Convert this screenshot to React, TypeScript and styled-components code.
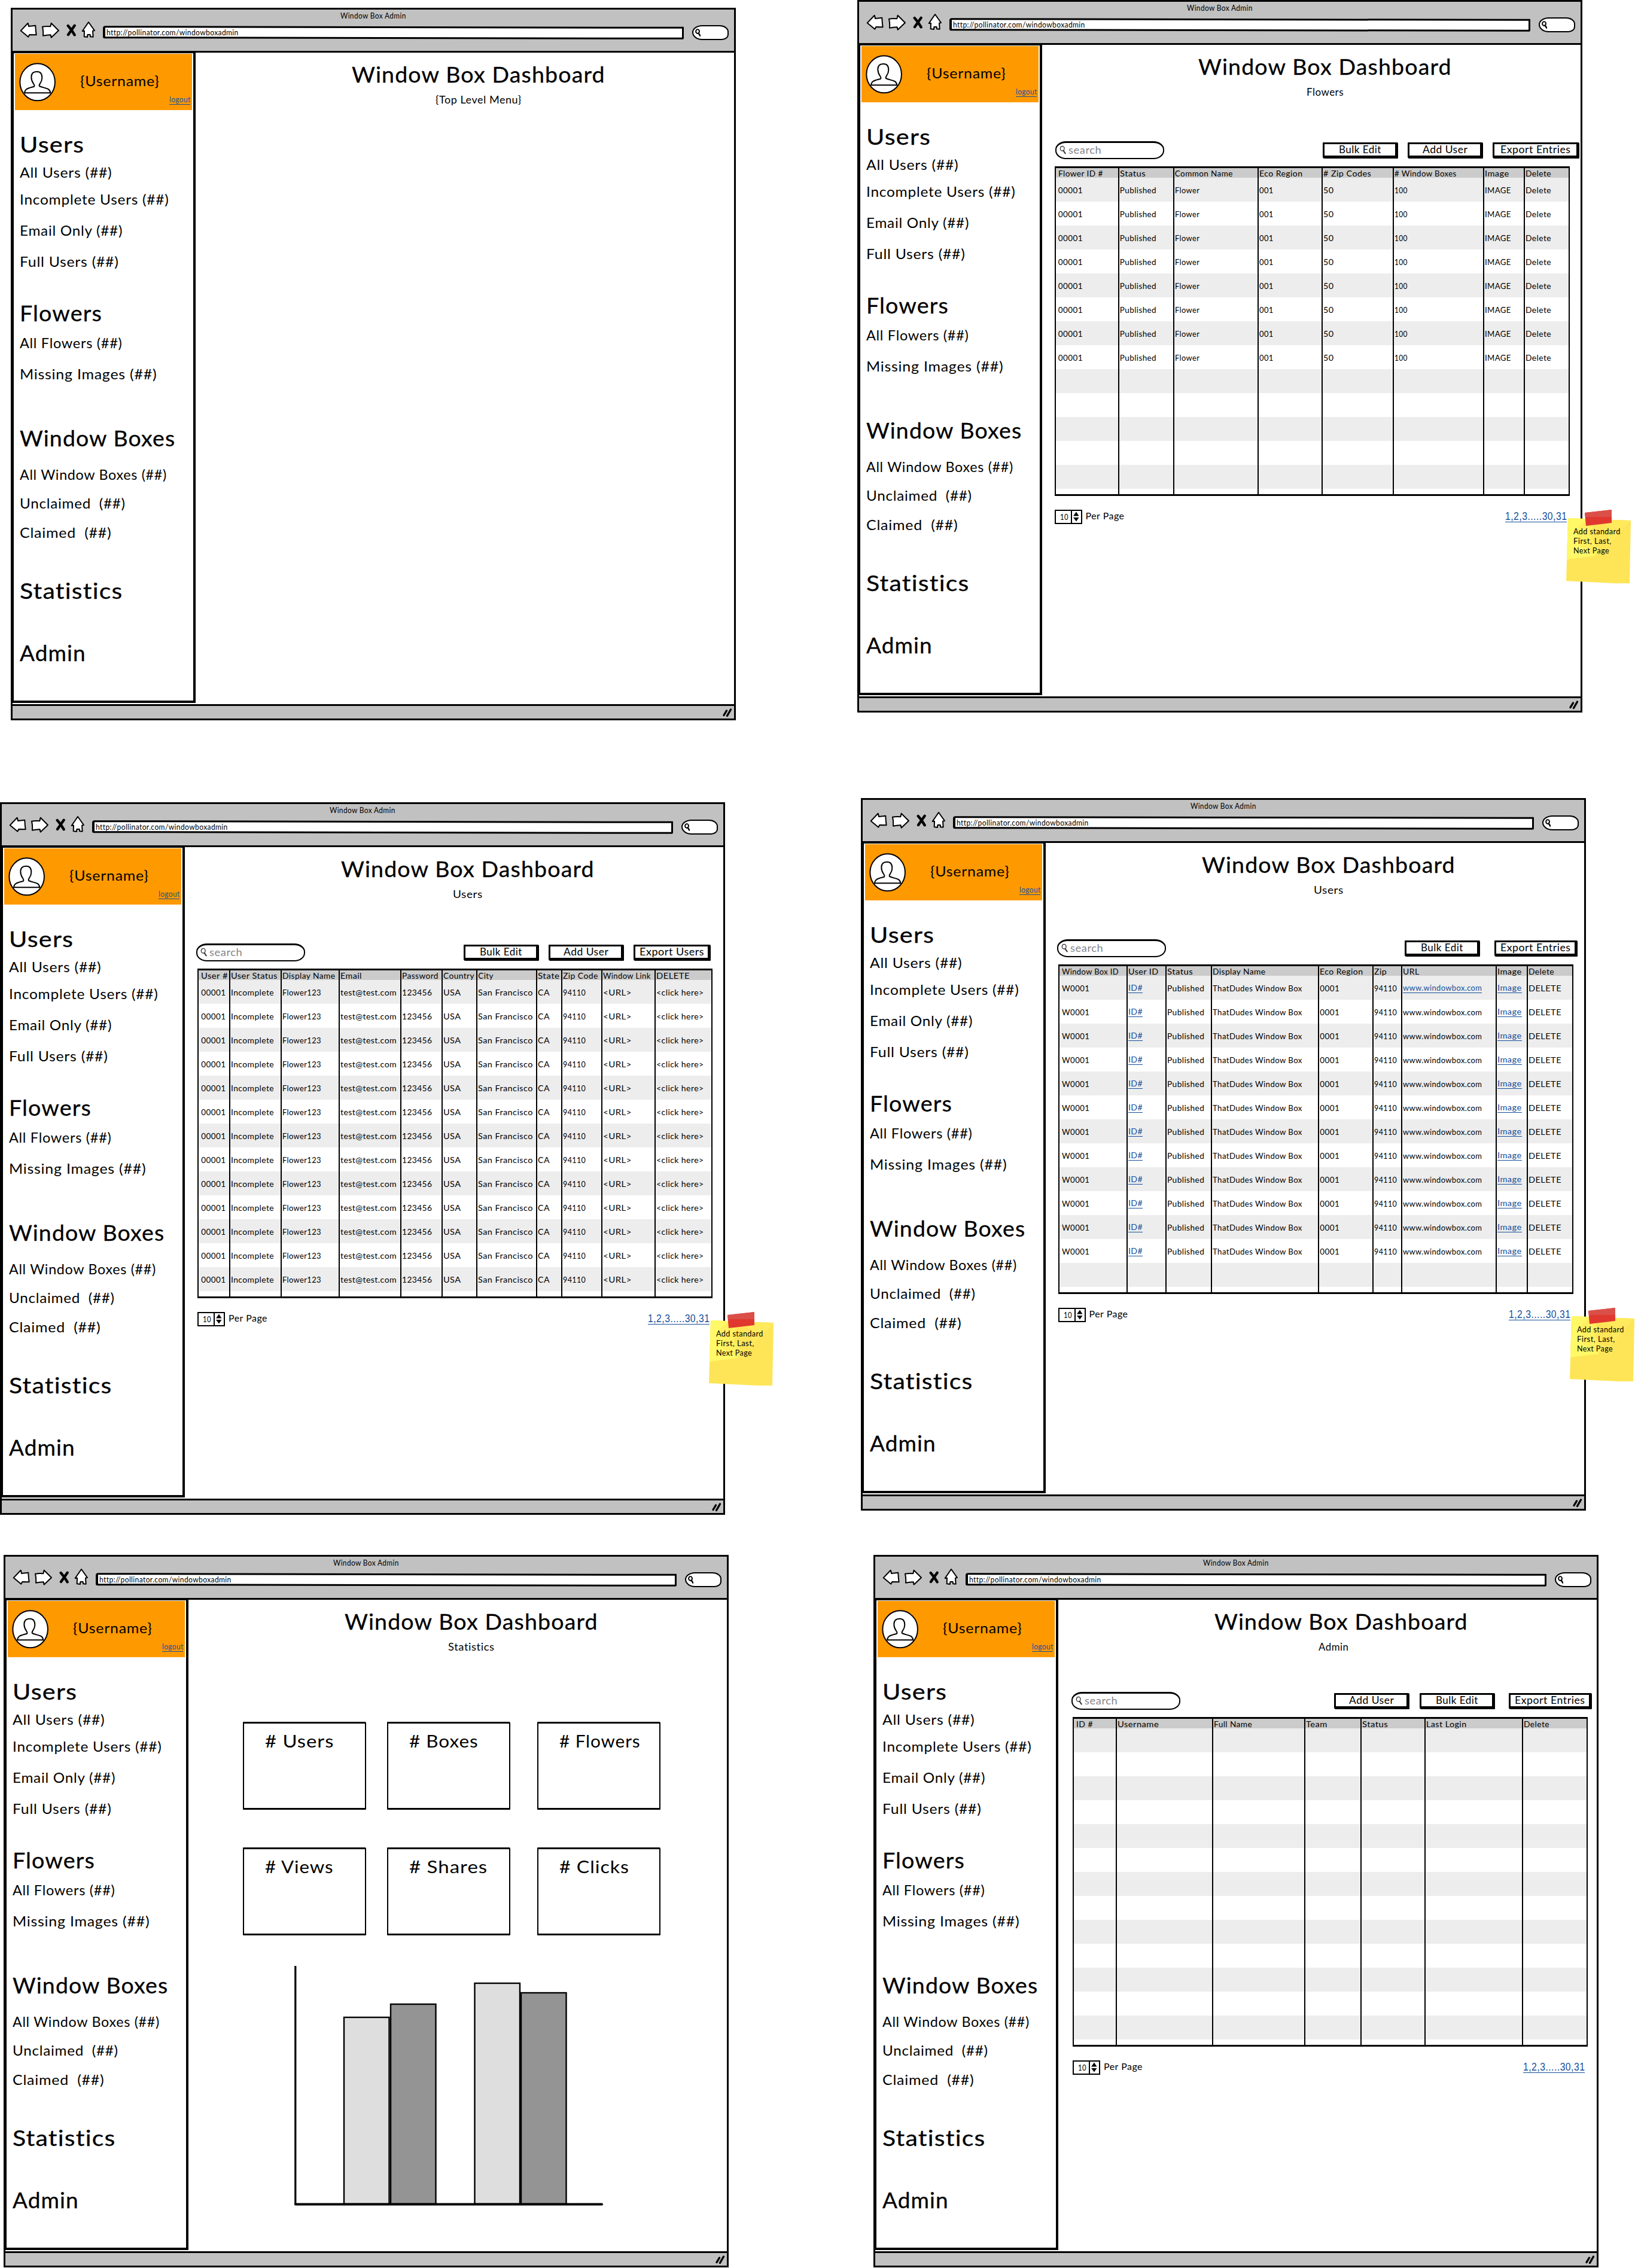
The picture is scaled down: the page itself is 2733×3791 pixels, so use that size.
import React, { useLayoutEffect, useRef, useState } from "react";
import styled, { createGlobalStyle } from "styled-components";

const INK = "#000";
const CHROME = "#c1c1c1";
const LINK = "#15509a";

const GlobalStyle = createGlobalStyle`
  html, body { margin: 0; padding: 0; background: #fff; }
  body { font-family: Lato, "Open Sans", sans-serif; color: ${INK}; font-variant-ligatures: none; }
  * { box-sizing: border-box; }
`;

/* ---------- text set to a given measure ---------- */

const Measure = styled.span`
  display: inline-block;
  white-space: pre;
  text-align: left;
`;

const Run = styled.span`
  display: inline-block;
  white-space: pre;
  letter-spacing: 0.03em;
  transform-origin: 0 50%;
`;

function Fit({ w, children }: { w: number; children: string }) {
  const ref = useRef<HTMLSpanElement>(null);
  const [scale, setScale] = useState(1);
  useLayoutEffect(() => {
    if (!ref.current) return;
    setScale(w / ref.current.offsetWidth);
  }, [w, children]);
  return (
    <Measure style={{ width: w }}>
      <Run ref={ref} style={{ transform: `scaleX(${scale})` }}>
        {children}
      </Run>
    </Measure>
  );
}

/* ---------- canvas and browser window ---------- */

const Canvas = styled.div`
  position: relative;
  width: 2733px;
  height: 3791px;
  overflow: hidden;
  background: #fff;
`;

const Frame = styled.section<{ $x: number; $y: number }>`
  position: absolute;
  left: ${(p) => p.$x}px;
  top: ${(p) => p.$y}px;
  width: 1212px;
  height: 1191px;
  border: 3px solid ${INK};
  display: flex;
  flex-direction: column;
  background: #fff;
`;

const Chrome = styled.header`
  height: 72px;
  flex: none;
  background: ${CHROME};
  border-bottom: 3px solid ${INK};
  padding-top: 1px;
`;

const WindowTitle = styled.div`
  height: 18px;
  line-height: 18px;
  font-size: 13px;
  text-align: center;
`;

const NavRow = styled.div`
  height: 30px;
  display: flex;
  align-items: center;
  padding-left: 12.3px;
`;

const Icon = styled.svg<{ $gap?: number }>`
  flex: none;
  display: block;
  margin-left: ${(p) => p.$gap ?? 0}px;
  fill: #fff;
  stroke: ${INK};
  stroke-width: 6;
  stroke-linejoin: round;
  stroke-linecap: round;
`;

const HeavyStroke = styled.path`
  stroke-width: 13;
`;

const UrlBar = styled.div`
  position: relative;
  width: 971px;
  height: 21px;
  margin: 8px 0 0 11px;
  padding-left: 6.5px;
  font-size: 14px;
  line-height: 20px;
  isolation: isolate;

  &::before {
    content: "";
    position: absolute;
    z-index: -1;
    inset: 0;
    background: #fff;
    border: 3px solid ${INK};
    border-left-width: 4px;
    border-radius: 4px 1px 2px 3px;
    transform: rotate(0.1deg);
  }
`;

const SearchPill = styled.div`
  width: 61px;
  height: 25px;
  margin: 8px 0 0 14px;
  border: 2.5px solid ${INK};
  border-radius: 18px 16px 12px 18px / 13px 12px 10px 14px;
  background: #fff;
  display: flex;
  align-items: center;
  padding-left: 3px;
`;

const Body = styled.div`
  height: 1089px;
  flex: none;
  display: flex;
`;

const Footer = styled.footer`
  flex: 1;
  background: ${CHROME};
  border-top: 3px solid ${INK};
  display: flex;
  justify-content: flex-end;
  align-items: center;
  padding-right: 2px;
`;

/* ---------- sidebar ---------- */

const Sidebar = styled.aside`
  width: 306px;
  height: 1087px;
  flex: none;
  border: solid ${INK};
  border-width: 1px 4px 4px 2px;
  padding: 1px 2px 0;
`;

const Profile = styled.div`
  height: 94px;
  background: #ff9900;
  display: flex;
  align-items: center;
  padding: 0 3px 0 6px;
`;

const Username = styled.div`
  margin: -3px 0 0 40px;
  font-size: 22.5px;
  line-height: 28px;
  width: 133px;
`;

const Logout = styled.a`
  align-self: flex-end;
  margin: 0 0 9px auto;
  font-size: 13.5px;
  line-height: 16px;
  color: ${LINK};
  border-bottom: 1px solid ${LINK};
`;

const NavHeading = styled.h2<{ $mt: number }>`
  margin: ${(p) => p.$mt}px 0 0;
  padding-left: 8px;
  height: 44px;
  line-height: 44px;
  font-size: 36px;
  font-weight: 400;
  -webkit-text-stroke: 0.3px currentColor;
`;

const NavLink = styled.div<{ $mt: number }>`
  margin-top: ${(p) => p.$mt}px;
  padding-left: 8px;
  height: 28px;
  line-height: 27px;
  font-size: 23px;
`;

type NavEntry = { label: string; w: number; mt: number; heading?: boolean };

const NAV: NavEntry[] = [
  { label: "Users", w: 108, mt: 34.6, heading: true },
  { label: "All Users (##)", w: 155, mt: 12.4 },
  { label: "Incomplete Users (##)", w: 250, mt: 16.7 },
  { label: "Email Only (##)", w: 172, mt: 24 },
  { label: "Full Users (##)", w: 166, mt: 24.1 },
  { label: "Flowers", w: 138, mt: 49.1, heading: true },
  { label: "All Flowers (##)", w: 172, mt: 15.1 },
  { label: "Missing Images (##)", w: 229, mt: 23.7 },
  { label: "Window Boxes", w: 260, mt: 70.3, heading: true },
  { label: "All Window Boxes (##)", w: 246, mt: 26 },
  { label: "Unclaimed  (##)", w: 177, mt: 19.6 },
  { label: "Claimed  (##)", w: 153, mt: 21 },
  { label: "Statistics", w: 173, mt: 60.4, heading: true },
  { label: "Admin", w: 111, mt: 60, heading: true },
];

/* ---------- main column ---------- */

const Main = styled.main`
  flex: 1;
  display: flex;
  flex-direction: column;
  align-items: flex-start;
  padding-top: 14px;
`;

const PageTitle = styled.h1`
  width: 100%;
  margin: 0;
  padding-left: 46px;
  text-align: center;
  font-size: 36px;
  line-height: 44px;
  font-weight: 400;
  -webkit-text-stroke: 0.3px currentColor;
`;

const SubTitle = styled.div<{ $shift?: number }>`
  width: 100%;
  margin-top: 9px;
  padding-left: ${(p) => 46 + (p.$shift ?? 0)}px;
  text-align: center;
  font-size: 17.5px;
  line-height: 24px;
`;

const Toolbar = styled.div<{ $mt: number; $x: number }>`
  height: 30px;
  margin: ${(p) => p.$mt}px 0 0 ${(p) => p.$x}px;
  display: flex;
  align-items: center;
`;

const SearchBox = styled.div`
  width: 182px;
  height: 30px;
  border: 2px solid ${INK};
  border-top-width: 3px;
  border-radius: 18px / 14px;
  display: flex;
  align-items: center;
  gap: 4px;
  padding: 0 0 2px 5px;
  color: #85858d;
  font-size: 17px;
  line-height: 22px;
`;

const Button = styled.div<{ $gap: number; $w: number }>`
  width: ${(p) => p.$w}px;
  height: 27px;
  margin-left: ${(p) => p.$gap}px;
  border: solid ${INK};
  border-width: 3px 5px 5px 3px;
  border-radius: 1px 2px 1px 3px;
  background: #fff;
  font-size: 16.5px;
  line-height: 19px;
  display: flex;
  justify-content: center;
`;

const Grid = styled.div<{ $x: number }>`
  width: 861px;
  height: 551px;
  margin: 12px 0 0 ${(p) => p.$x}px;
  border: solid ${INK};
  border-width: 3px 2px;
  display: flex;
  flex-direction: column;
  overflow: hidden;
  font-size: 13.5px;
`;

const GridRow = styled.div<{ $cols: string; $bg: string; $h: number }>`
  display: grid;
  grid-template-columns: ${(p) => p.$cols};
  height: ${(p) => p.$h}px;
  flex: none;
  background: ${(p) => p.$bg};
`;

const Cell = styled.div<{ $pad: number }>`
  display: flex;
  align-items: center;
  line-height: 18px;
  padding: ${(p) => p.$pad}px 0 0 1.3px;
  border-right: 2px solid ${INK};
  min-width: 0;

  &:first-child { padding-left: 4.3px; }
  &:last-child { border-right: 0; }
`;

const CellLink = styled.a`
  height: 16px;
  line-height: 15px;
  color: ${LINK};
  border-bottom: 1px solid ${LINK};
`;

const Pager = styled.div<{ $x: number }>`
  width: 856px;
  height: 24px;
  margin: 23px 0 0 ${(p) => p.$x}px;
  display: flex;
  align-items: center;
`;

const Stepper = styled.div`
  width: 46px;
  height: 24px;
  border: 2.5px solid ${INK};
  display: flex;
  font-size: 13px;
  line-height: 20px;
`;

const StepperValue = styled.div`
  width: 27px;
  padding-left: 7px;
  border-right: 2px solid ${INK};
`;

const PerPage = styled.div`
  margin: -4px 0 0 6px;
  font-size: 16px;
  line-height: 22px;
`;

const PageLinks = styled.a`
  margin: -4px 0 0 auto;
  height: 21px;
  line-height: 21px;
  font-family: "Liberation Sans", Arial, sans-serif;
  font-size: 18.5px;
  color: ${LINK};
  border-bottom: 1px solid ${LINK};
`;

/* ---------- sticky note ---------- */

const Note = styled.div`
  position: absolute;
  z-index: 1;
  left: 1182px;
  top: 848px;
  width: 110px;
  height: 126px;
  padding: 29px 0 0 12px;
  font-size: 13px;
  line-height: 16px;
`;

const NotePaper = styled.svg`
  position: absolute;
  inset: 0;
  z-index: -1;
`;

const NoteLine = styled.div`
  height: 16.2px;
`;

function StickyNote() {
  return (
    <Note>
      <NotePaper width="110" height="126" viewBox="0 0 110 126">
        <polygon points="3,15 108,19 106,124 82,124 0,120" fill="#fee557" />
        <polygon points="3,15 46,17 42,48 58,74 1,84" fill="#fff05f" />
        <polygon points="3,15 34,16 18,30 22,62 50,78 1,84" fill="#fffb69" opacity="0.75" />
        <polygon points="46,17 74,32 66,66 108,19" fill="#ffe95c" />
        <polygon points="31,6 76,1 76,23 33,28" fill="#e0382f" />
        <polygon points="31,6 76,1 76,13 32,13" fill="#da5049" />
      </NotePaper>
      <NoteLine><Fit w={79}>Add standard</Fit></NoteLine>
      <NoteLine><Fit w={64}>First, Last,</Fit></NoteLine>
      <NoteLine><Fit w={60}>Next Page</Fit></NoteLine>
    </Note>
  );
}

/* ---------- shared pieces ---------- */

function Magnifier({ size, heavy }: { size: number; heavy?: boolean }) {
  return (
    <svg width={size * 0.75} height={size} viewBox="0 0 12 16" fill="none" stroke={heavy ? INK : "#333"} strokeWidth={heavy ? 2.4 : 1.4} strokeLinecap="round">
      <ellipse cx="5" cy="5.6" rx="3.6" ry="4.2" />
      <path d="M7 9.4 L10.4 14.4" strokeWidth={heavy ? 3 : 2.2} />
    </svg>
  );
}

function BrowserChrome() {
  return (
    <Chrome>
      <WindowTitle><Fit w={110}>Window Box Admin</Fit></WindowTitle>
      <NavRow>
        <Icon width="29.3" height="28.7" viewBox="58 76 88 86">
          <path d="M63 122 L99 84 Q102 90 103 100 L137 96 Q138 120 141 143 L107 142 L101 153 Z" />
        </Icon>
        <Icon $gap={6.6} width="31.3" height="28.7" viewBox="166 76 94 86">
          <path d="M172 102 Q192 98 212 101 L216 84 L253 121 L216 156 L213 143 Q194 144 175 147 Q177 124 172 102 Z" />
        </Icon>
        <Icon $gap={10} width="18.7" height="22" viewBox="290 82 56 66">
          <HeavyStroke d="M301 94 Q318 112 334 140 M334 93 L302 139" />
        </Icon>
        <Icon $gap={6.7} width="24.7" height="29.3" viewBox="366 76 74 88">
          <path d="M402 82 L432 124 L423 126 L425 156 L411 155 L410 145 L397 145 L396 157 L380 155 L381 126 L371 127 Z" />
        </Icon>
        <UrlBar><Fit w={221}>http://pollinator.com/windowboxadmin</Fit></UrlBar>
        <SearchPill><Magnifier size={13} heavy /></SearchPill>
      </NavRow>
    </Chrome>
  );
}

function SideNav() {
  return (
    <Sidebar>
      <Profile>
        <Icon width="63.3" height="66.7" viewBox="52 280 190 200">
          <ellipse cx="147" cy="380" rx="88" ry="93" />
          <path d="M82 434 C84 412 100 411 130 402 C138 392 116 386 116 355 C116 335 128 327 144 327 C162 327 170 338 170 358 C170 385 150 390 157 400 C180 412 210 406 212 434 Z" />
        </Icon>
        <Username><Fit w={133}>{"{Username}"}</Fit></Username>
        <Logout><Fit w={35.5}>logout</Fit></Logout>
      </Profile>
      {NAV.map((n) =>
        n.heading ? (
          <NavHeading key={n.label} $mt={n.mt}><Fit w={n.w}>{n.label}</Fit></NavHeading>
        ) : (
          <NavLink key={n.label} $mt={n.mt}><Fit w={n.w}>{n.label}</Fit></NavLink>
        )
      )}
    </Sidebar>
  );
}

type ScreenProps = {
  x: number;
  y: number;
  sub: string;
  subW: number;
  subShift?: number;
  note?: boolean;
  children?: React.ReactNode;
};

function Screen({ x, y, sub, subW, subShift, note, children }: ScreenProps) {
  return (
    <Frame $x={x} $y={y}>
      <BrowserChrome />
      <Body>
        <SideNav />
        <Main>
          <PageTitle><Fit w={424}>Window Box Dashboard</Fit></PageTitle>
          <SubTitle $shift={subShift}><Fit w={subW}>{sub}</Fit></SubTitle>
          {children}
        </Main>
      </Body>
      <Footer>
        <svg width="18" height="16" viewBox="0 0 18 16" stroke={INK} strokeWidth="3.4" strokeLinecap="round">
          <path d="M3 12.5 L7.5 5 M8.5 13.5 L14.5 3" />
        </svg>
      </Footer>
      {note && <StickyNote />}
    </Frame>
  );
}

type Column = { head: string; hw: number; edge?: number; cell?: string; cw?: number; link?: boolean; linkFirst?: boolean };
type Action = { label: string; w: number; box: number; gap: number };

type ListingProps = {
  top?: number;
  toolX: number;
  gridX: number;
  actions: Action[];
  columns: Column[];
  filled: number;
};

function Listing({ top = 70, toolX, gridX, actions, columns, filled }: ListingProps) {
  let from = 2;
  const cols = columns
    .map((c) => {
      if (c.edge === undefined) return "1fr";
      const width = c.edge - from;
      from = c.edge;
      return `${width.toFixed(1)}px`;
    })
    .join(" ");
  return (
    <>
      <Toolbar $mt={top} $x={toolX}>
        <SearchBox><Magnifier size={15} /><Fit w={55}>search</Fit></SearchBox>
        {actions.map((a) => (
          <Button key={a.label} $gap={a.gap} $w={a.box}><Fit w={a.w}>{a.label}</Fit></Button>
        ))}
      </Toolbar>
      <Grid $x={gridX}>
        <GridRow $cols={cols} $bg="#cbcbcb" $h={16}>
          {columns.map((c) => (
            <Cell key={c.head} $pad={0}><Fit w={c.hw}>{c.head}</Fit></Cell>
          ))}
        </GridRow>
        {Array.from({ length: 14 }, (_, r) => (
          <GridRow key={r} $cols={cols} $bg={r % 2 ? "#fff" : "#ededed"} $h={40}>
            {columns.map((c) => {
              const text = r < filled && c.cell ? <Fit w={c.cw ?? 0}>{c.cell}</Fit> : null;
              const linked = c.link || (c.linkFirst && r === 0);
              return (
                <Cell key={c.head} $pad={2}>
                  {text && linked ? <CellLink>{text}</CellLink> : text}
                </Cell>
              );
            })}
          </GridRow>
        ))}
      </Grid>
      <Pager $x={gridX}>
        <Stepper>
          <StepperValue><Fit w={14}>10</Fit></StepperValue>
          <svg width="13" height="19" viewBox="0 0 13 19" fill={INK}>
            <path d="M7 1.5 L11.5 8.5 H2 Z M2 11 H11.5 L7 17.5 Z" />
          </svg>
        </Stepper>
        <PerPage><Fit w={65}>Per Page</Fit></PerPage>
        <PageLinks><Fit w={103}>1,2,3.....30,31</Fit></PageLinks>
      </Pager>
    </>
  );
}

/* ---------- statistics ---------- */

const Cards = styled.div`
  margin: 113px 0 0 91px;
  display: grid;
  grid-template-columns: 241px 251px 206px;
  row-gap: 63px;
`;

const Card = styled.div`
  width: 206px;
  height: 147px;
  border: solid ${INK};
  border-width: 3px 2px;
  border-radius: 1px 2px 1px 1px;
  padding: 12px 0 0 35px;
  font-size: 28px;
  line-height: 34px;
`;

const Chart = styled.svg`
  display: block;
  margin: 51px 0 0 177px;
`;

const STATS = [
  ["# Users", 115],
  ["# Boxes", 116],
  ["# Flowers", 136],
  ["# Views", 115],
  ["# Shares", 131],
  ["# Clicks", 117],
] as const;

const BARS = [
  { x: 83, top: 86, fill: "#dedede" },
  { x: 161, top: 64, fill: "#949494" },
  { x: 301.5, top: 29, fill: "#dedede" },
  { x: 379, top: 45, fill: "#949494" },
];

function Statistics() {
  return (
    <>
      <Cards>
        {STATS.map(([label, w]) => (
          <Card key={label}><Fit w={w}>{label}</Fit></Card>
        ))}
      </Cards>
      <Chart width="520" height="403" viewBox="0 0 520 403" stroke={INK}>
        {BARS.map((b) => (
          <rect key={b.x} x={b.x} y={b.top} width="75.5" height={398 - b.top} fill={b.fill} strokeWidth="2.4" />
        ))}
        <path d="M1.8 1 V398.5" strokeWidth="3.2" strokeLinecap="round" fill="none" />
        <path d="M2 398.5 H514" strokeWidth="4" strokeLinecap="round" fill="none" />
      </Chart>
    </>
  );
}

/* ---------- data ---------- */

const FLOWER_COLUMNS: Column[] = [
  { head: "Flower ID #", hw: 75, edge: 108, cell: "00001", cw: 41 },
  { head: "Status", hw: 43, edge: 200, cell: "Published", cw: 61 },
  { head: "Common Name", hw: 97, edge: 341.5, cell: "Flower", cw: 41 },
  { head: "Eco Region", hw: 73, edge: 448.5, cell: "001", cw: 24 },
  { head: "# Zip Codes", hw: 80, edge: 567, cell: "50", cw: 17 },
  { head: "# Window Boxes", hw: 104, edge: 718.5, cell: "100", cw: 22 },
  { head: "Image", hw: 41, edge: 786, cell: "IMAGE", cw: 44 },
  { head: "Delete", hw: 43, cell: "Delete", cw: 43 },
];

const USER_COLUMNS: Column[] = [
  { head: "User #", hw: 45, edge: 54.5, cell: "00001", cw: 41 },
  { head: "User Status", hw: 78, edge: 140.5, cell: "Incomplete", cw: 72 },
  { head: "Display Name", hw: 89, edge: 237.5, cell: "Flower123", cw: 65 },
  { head: "Email", hw: 36, edge: 341, cell: "test@test.com", cw: 94 },
  { head: "Password", hw: 61, edge: 409.5, cell: "123456", cw: 50 },
  { head: "Country", hw: 52, edge: 468, cell: "USA", cw: 29 },
  { head: "City", hw: 26, edge: 568, cell: "San Francisco", cw: 92 },
  { head: "State", hw: 36, edge: 610, cell: "CA", cw: 20 },
  { head: "Zip Code", hw: 59, edge: 677, cell: "94110", cw: 38 },
  { head: "Window Link", hw: 80, edge: 766, cell: "<URL>", cw: 48 },
  { head: "DELETE", hw: 56, cell: "<click here>", cw: 80 },
];

const BOX_COLUMNS: Column[] = [
  { head: "Window Box ID", hw: 95, edge: 116.5, cell: "W0001", cw: 46 },
  { head: "User ID", hw: 51, edge: 181, cell: "ID#", cw: 24, link: true },
  { head: "Status", hw: 43, edge: 257, cell: "Published", cw: 62 },
  { head: "Display Name", hw: 89, edge: 436.5, cell: "ThatDudes Window Box", cw: 150 },
  { head: "Eco Region", hw: 73, edge: 527, cell: "0001", cw: 33 },
  { head: "Zip", hw: 21, edge: 575.5, cell: "94110", cw: 38 },
  { head: "URL", hw: 28, edge: 733, cell: "www.windowbox.com", cw: 132, linkFirst: true },
  { head: "Image", hw: 41, edge: 785.5, cell: "Image", cw: 41, link: true },
  { head: "Delete", hw: 43, cell: "DELETE", cw: 55 },
];

const ADMIN_COLUMNS: Column[] = [
  { head: "ID #", hw: 28, edge: 73.5 },
  { head: "Username", hw: 69, edge: 234.5 },
  { head: "Full Name", hw: 64, edge: 388.5 },
  { head: "Team", hw: 36, edge: 482.5 },
  { head: "Status", hw: 43, edge: 590 },
  { head: "Last Login", hw: 68, edge: 752.5 },
  { head: "Delete", hw: 43 },
];

export default function App() {
  return (
    <>
      <GlobalStyle />
      <Canvas>
        <Screen x={18} y={13} sub="{Top Level Menu}" subW={144} />

        <Screen x={1433} y={0} sub="Flowers" subW={62} note>
          <Listing
            toolX={22}
            gridX={20.5}
            filled={8}
            columns={FLOWER_COLUMNS}
            actions={[
              { label: "Bulk Edit", w: 71, box: 126, gap: 265 },
              { label: "Add User", w: 75, box: 126, gap: 16 },
              { label: "Export Entries", w: 118, box: 145, gap: 16 },
            ]}
          />
        </Screen>

        <Screen x={0} y={1341} sub="Users" subW={50} note>
          <Listing
            toolX={19}
            gridX={21}
            filled={13}
            columns={USER_COLUMNS}
            actions={[
              { label: "Bulk Edit", w: 71, box: 126, gap: 265 },
              { label: "Add User", w: 75, box: 126, gap: 16 },
              { label: "Export Users", w: 108, box: 129, gap: 16 },
            ]}
          />
        </Screen>

        <Screen x={1439} y={1334} sub="Users" subW={50} note>
          <Listing
            toolX={19}
            gridX={20.5}
            filled={12}
            columns={BOX_COLUMNS}
            actions={[
              { label: "Bulk Edit", w: 71, box: 126, gap: 399 },
              { label: "Export Entries", w: 118, box: 139, gap: 24 },
            ]}
          />
        </Screen>

        <Screen x={6} y={2599} sub="Statistics" subW={78}>
          <Statistics />
        </Screen>

        <Screen x={1460} y={2599} sub="Admin" subW={50} subShift={-27}>
          <Listing
            top={63}
            toolX={22}
            gridX={24}
            filled={0}
            columns={ADMIN_COLUMNS}
            actions={[
              { label: "Add User", w: 75, box: 126, gap: 257 },
              { label: "Bulk Edit", w: 71, box: 126, gap: 17 },
              { label: "Export Entries", w: 118, box: 139, gap: 23 },
            ]}
          />
        </Screen>
      </Canvas>
    </>
  );
}
